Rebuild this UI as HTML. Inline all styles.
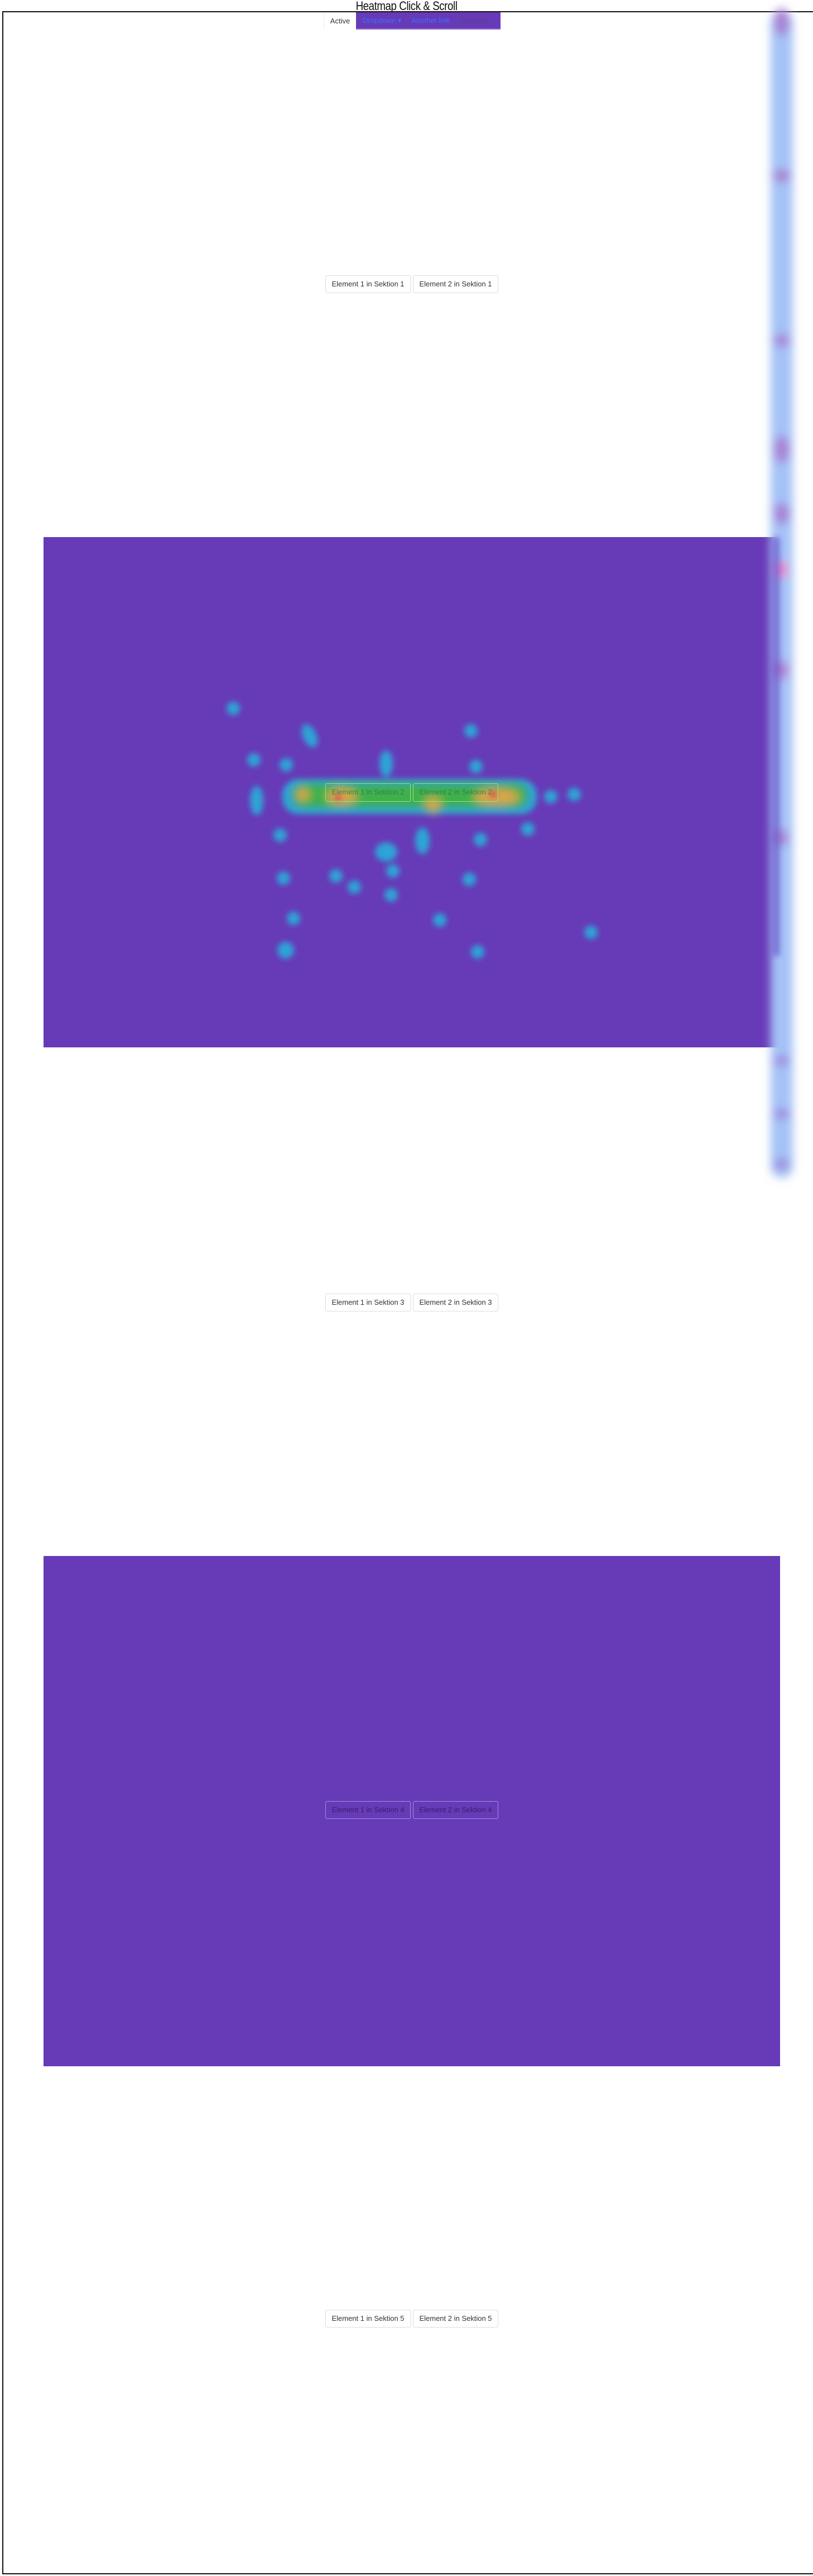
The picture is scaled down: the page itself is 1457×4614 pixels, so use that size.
<!DOCTYPE html>
<html><head><meta charset="utf-8"><style>
*{margin:0;padding:0;box-sizing:border-box}
body{width:1457px;height:4614px;background:#fff;position:relative;overflow:hidden;font-family:"Liberation Sans",sans-serif}
h1{position:absolute;top:-2px;left:0;width:1457px;text-align:center;font-weight:normal;font-size:22px;color:#111;letter-spacing:-0.5px;transform:scaleX(0.85)}
.frame{position:absolute;left:4px;top:20px;width:1470px;height:4591px;border:2px solid #111}
.nav{position:absolute;top:22px;left:580px;height:31px;display:flex;font-size:13px}
.nav .a{width:58px;background:#fff;color:#333;line-height:31px;text-align:center;border-left:1px solid #eee}
.nav .p{width:259px;background:#673ab7;border-bottom:2px solid #9575cd;display:flex;gap:18px;padding-left:12px;line-height:30px;color:#3f6dff}
.sec{position:absolute;left:78px;width:1320px;height:914px}
.pur{background:#673ab7}
.btns{position:absolute;left:583px;display:flex;gap:4px}
.b{width:153px;height:32px;border:1px solid #ddd;border-radius:3px;background:#fff;font-size:13px;color:#333;text-align:center;line-height:30px}
.b.v{background:transparent;border-color:#a58ee0;color:#3a1d6b}
.b.h{background:transparent;border-color:#9be07a;color:rgba(40,120,80,.8);height:33px}
</style></head><body>
<h1>Heatmap Click &amp; Scroll</h1>
<div class="frame"></div>
<div class="nav"><div class="a">Active</div><div class="p"><span>Dropdown ▾</span><span>Another link</span><span style="color:#5b3f8f">Disabled</span></div></div>

<div class="sec pur" style="top:962px"></div>
<div class="sec pur" style="top:2787px"></div>

<svg style="position:absolute;left:0;top:0" width="1457" height="4614">
<defs>
<filter id="bl" x="-50%" y="-50%" width="200%" height="200%"><feGaussianBlur stdDeviation="5"/></filter>
<filter id="bl2" x="-50%" y="-50%" width="200%" height="200%"><feGaussianBlur stdDeviation="8"/></filter>
</defs>
<g filter="url(#bl)" fill="#2fa3d6">
<circle cx="418" cy="1269" r="12"/>
<ellipse cx="555" cy="1318" rx="12" ry="22" transform="rotate(-25 555 1318)"/>
<circle cx="844" cy="1309" r="12"/>
<circle cx="455" cy="1361" r="12"/>
<circle cx="513" cy="1370" r="12"/>
<ellipse cx="692" cy="1368" rx="12" ry="24"/>
<circle cx="853" cy="1373" r="12"/>
<ellipse cx="460" cy="1434" rx="12" ry="26"/>
<circle cx="987" cy="1427" r="12"/>
<circle cx="1029" cy="1423" r="12"/>
<circle cx="502" cy="1496" r="12"/>
<circle cx="946" cy="1485" r="12"/>
<circle cx="861" cy="1504" r="12"/>
<ellipse cx="757" cy="1506" rx="13" ry="24"/>
<ellipse cx="692" cy="1526" rx="20" ry="17"/>
<circle cx="508" cy="1573" r="12"/>
<circle cx="602" cy="1569" r="12"/>
<circle cx="635" cy="1589" r="12"/>
<circle cx="704" cy="1560" r="12"/>
<circle cx="701" cy="1603" r="12"/>
<circle cx="841" cy="1575" r="12"/>
<circle cx="526" cy="1645" r="12"/>
<circle cx="788" cy="1648" r="12"/>
<circle cx="1059" cy="1670" r="12"/>
<circle cx="512" cy="1702" r="15"/>
<circle cx="856" cy="1705" r="12"/>
<rect x="506" y="1396" width="456" height="62" rx="28"/>
</g>
<g filter="url(#bl2)">
<rect x="525" y="1405" width="420" height="40" rx="18" fill="#3fb04a"/>
<circle cx="542" cy="1423" r="12" fill="#d9a54a"/>
<ellipse cx="612" cy="1427" rx="26" ry="16" fill="#d9a54a"/>
<circle cx="776" cy="1442" r="14" fill="#d9a54a"/>
<ellipse cx="890" cy="1428" rx="40" ry="16" fill="#d9a54a"/>
</g>
<g filter="url(#bl)" fill="#d8205a">
<circle cx="606" cy="1429" r="5"/><circle cx="884" cy="1423" r="5"/>
</g>
<g filter="url(#bl2)">
<rect x="1381" y="20" width="40" height="2090" rx="20" fill="#a4c2f6"/>
<ellipse cx="1401" cy="40" rx="14" ry="25" fill="#a882d6"/>
<ellipse cx="1401" cy="315" rx="16" ry="12" fill="#a882d6"/>
<ellipse cx="1401" cy="610" rx="14" ry="12" fill="#a882d6"/>
<ellipse cx="1401" cy="805" rx="14" ry="25" fill="#a882d6"/>
<ellipse cx="1401" cy="920" rx="14" ry="20" fill="#a882d6"/>
<ellipse cx="1401" cy="1020" rx="10" ry="15" fill="#f07ac0"/>
<ellipse cx="1401" cy="1200" rx="12" ry="18" fill="#b080d0"/>
<ellipse cx="1401" cy="1500" rx="12" ry="16" fill="#a882d6"/>
<ellipse cx="1401" cy="1900" rx="14" ry="10" fill="#a08ae0"/>
<ellipse cx="1401" cy="1995" rx="14" ry="10" fill="#a08ae0"/>
<ellipse cx="1401" cy="2085" rx="14" ry="10" fill="#a08ae0"/>
</g>
<rect x="1385" y="962" width="13" height="750" fill="#5020b8" opacity="0.45" filter="url(#bl)"/>
</svg>

<div class="btns" style="top:493px"><div class="b">Element 1 in Sektion 1</div><div class="b">Element 2 in Sektion 1</div></div>
<div class="btns" style="top:1403px"><div class="b h">Element 1 in Sektion 2</div><div class="b h">Element 2 in Sektion 2</div></div>
<div class="btns" style="top:2317px"><div class="b">Element 1 in Sektion 3</div><div class="b">Element 2 in Sektion 3</div></div>
<div class="btns" style="top:3226px"><div class="b v">Element 1 in Sektion 4</div><div class="b v">Element 2 in Sektion 4</div></div>
<div class="btns" style="top:4137px"><div class="b">Element 1 in Sektion 5</div><div class="b">Element 2 in Sektion 5</div></div>
</body></html>
